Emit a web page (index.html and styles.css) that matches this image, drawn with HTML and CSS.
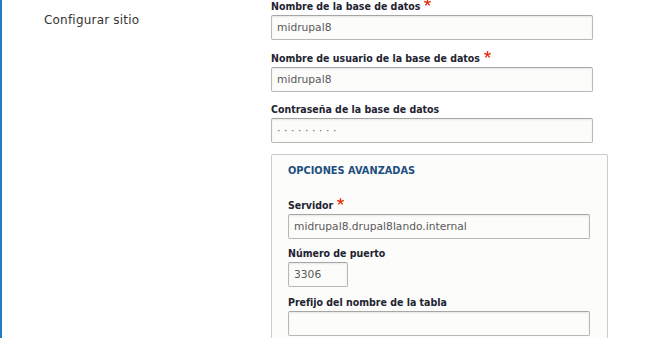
FILE: index.html
```html
<!DOCTYPE html>
<html lang="es">
<head>
<meta charset="utf-8">
<title>Configurar sitio</title>
<link rel="stylesheet" href="styles.css">
</head>
<body>
<div class="page">
  <aside class="sidebar">
    <div class="task">Configurar sitio</div>
  </aside>
  <main class="main">
    <div class="form-item">
      <label class="label" for="db">Nombre de la base de datos<svg class="req" viewBox="0 0 16 16" aria-hidden="true"><path d="M0,7.562l1.114-3.438c2.565,0.906,4.43,1.688,5.59,2.35C6.398,3.553,6.237,1.544,6.22,0.447h3.511c-0.05,1.597-0.234,3.6-0.558,6.003c1.664-0.838,3.566-1.613,5.714-2.325L16,7.562c-2.05,0.678-4.06,1.131-6.028,1.356c0.984,0.856,2.372,2.381,4.166,4.575l-2.906,2.059c-0.935-1.274-2.041-3.009-3.316-5.206c-1.194,2.275-2.244,4.013-3.147,5.206l-2.856-2.059c1.872-2.307,3.211-3.832,4.017-4.575C3.849,8.516,1.872,8.062,0,7.562"/></svg></label>
      <input class="input" id="db" type="text" value="midrupal8">
    </div>
    <div class="form-item">
      <label class="label" for="user">Nombre de usuario de la base de datos<svg class="req" viewBox="0 0 16 16" aria-hidden="true"><path d="M0,7.562l1.114-3.438c2.565,0.906,4.43,1.688,5.59,2.35C6.398,3.553,6.237,1.544,6.22,0.447h3.511c-0.05,1.597-0.234,3.6-0.558,6.003c1.664-0.838,3.566-1.613,5.714-2.325L16,7.562c-2.05,0.678-4.06,1.131-6.028,1.356c0.984,0.856,2.372,2.381,4.166,4.575l-2.906,2.059c-0.935-1.274-2.041-3.009-3.316-5.206c-1.194,2.275-2.244,4.013-3.147,5.206l-2.856-2.059c1.872-2.307,3.211-3.832,4.017-4.575C3.849,8.516,1.872,8.062,0,7.562"/></svg></label>
      <input class="input" id="user" type="text" value="midrupal8">
    </div>
    <div class="form-item">
      <label class="label" for="pass">Contraseña de la base de datos</label>
      <input class="input input-pass" id="pass" type="text" value="·········">
    </div>
    <fieldset class="fieldset">
      <legend class="legend">Opciones avanzadas</legend>
      <div class="fieldset-body">
        <div class="form-item inner">
          <label class="label" for="host">Servidor<svg class="req" viewBox="0 0 16 16" aria-hidden="true"><path d="M0,7.562l1.114-3.438c2.565,0.906,4.43,1.688,5.59,2.35C6.398,3.553,6.237,1.544,6.22,0.447h3.511c-0.05,1.597-0.234,3.6-0.558,6.003c1.664-0.838,3.566-1.613,5.714-2.325L16,7.562c-2.050,0.678-4.06,1.131-6.028,1.356c0.984,0.856,2.372,2.381,4.166,4.575l-2.906,2.059c-0.935-1.274-2.041-3.009-3.316-5.206c-1.194,2.275-2.244,4.013-3.147,5.206l-2.856-2.059c1.872-2.307,3.211-3.832,4.017-4.575C3.849,8.516,1.872,8.062,0,7.562"/></svg></label>
          <input class="input input-inner" id="host" type="text" value="midrupal8.drupal8lando.internal">
        </div>
        <div class="form-item inner">
          <label class="label" for="port">Número de puerto</label>
          <input class="input input-port" id="port" type="text" value="3306">
        </div>
        <div class="form-item inner">
          <label class="label" for="prefix">Prefijo del nombre de la tabla</label>
          <input class="input input-inner" id="prefix" type="text" value="">
        </div>
      </div>
    </fieldset>
  </main>
</div>
</body>
</html>
```

FILE: styles.css
```css
html, body {
  margin: 0;
  padding: 0;
  background: #ffffff;
  overflow: hidden;
}

body {
  font-family: "DejaVu Sans", "Liberation Sans", sans-serif;
  color: #222330;
}

.page {
  display: flex;
  min-height: 100vh;
  border-left: 2px solid #1f7bc2;
}

.sidebar {
  width: 227px;
  padding-left: 42px;
  padding-top: 11px;
  flex: none;
}

.task {
  font-size: 12px;
  line-height: 18px;
  color: #333333;
  letter-spacing: 0.2px;
}

.main {
  display: flex;
  flex-direction: column;
  align-items: flex-start;
  margin-top: -1px;
}

.form-item {
  display: flex;
  flex-direction: column;
  align-items: flex-start;
  margin-bottom: 10.5px;
}

.form-item.inner {
  margin-bottom: 7.5px;
}

.label {
  display: block;
  height: 14px;
  font-family: "DejaVu Sans Condensed", "DejaVu Sans", sans-serif;
  font-stretch: condensed;
  font-size: 10.5px;
  line-height: 14px;
  font-weight: bold;
  color: #222330;
  margin-bottom: 2px;
  white-space: nowrap;
}

.req {
  width: 7px;
  height: 7px;
  margin-left: 4px;
  vertical-align: 4px;
  fill: #e62600;
}

.input {
  box-sizing: border-box;
  width: 322px;
  height: 25px;
  margin: 0;
  padding: 0 5px;
  font-family: "DejaVu Sans", "Liberation Sans", sans-serif;
  font-size: 10.7px;
  color: #595959;
  background: #fcfcfa;
  border: 1px solid #b8b8b8;
  border-top-color: #a6a6a6;
  border-radius: 2px;
  box-shadow: inset 0 1px 2px rgba(0, 0, 0, 0.09);
  outline: none;
}

.input-pass {
  letter-spacing: 3.6px;
  color: #666666;
}

.input-inner {
  width: 302px;
}

.input-port {
  width: 60px;
}

.fieldset {
  box-sizing: border-box;
  width: 337px;
  margin: 0;
  padding: 0 16px;
  border: 1px solid #cccccc;
  border-radius: 2px;
  background: #fcfcfa;
}

.legend {
  float: left;
  width: 100%;
  padding: 9.5px 0 0;
  font-size: 9.8px;
  line-height: 14px;
  font-weight: bold;
  text-transform: uppercase;
  color: #1c4f80;
}

.fieldset-body {
  clear: both;
  padding-top: 19.5px;
}
```
